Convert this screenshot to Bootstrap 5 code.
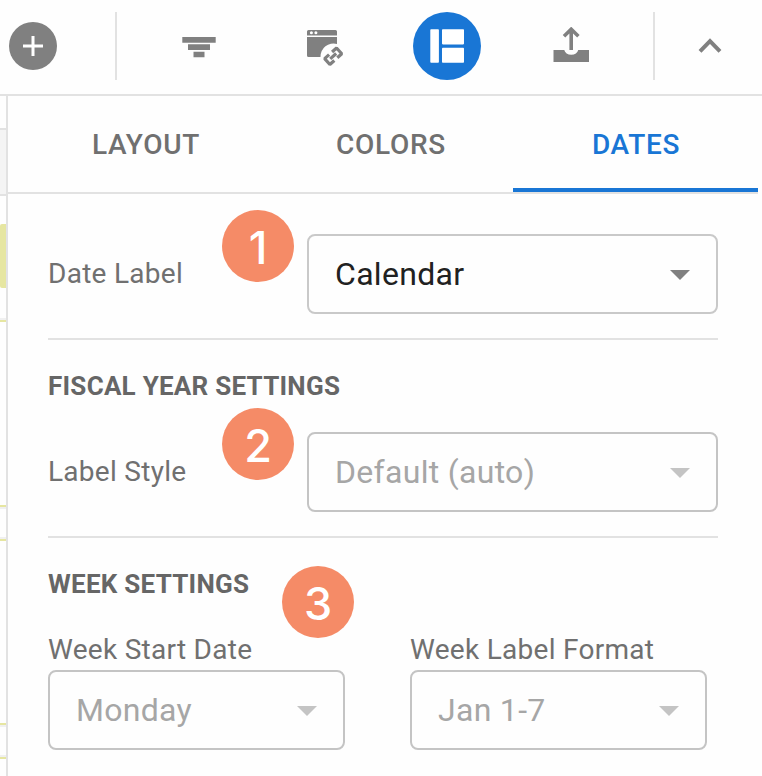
<!DOCTYPE html>
<html lang="en">
<head>
<meta charset="utf-8">
<meta name="viewport" content="width=device-width, initial-scale=1">
<title>Date settings</title>
<link rel="stylesheet" href="https://cdn.jsdelivr.net/npm/bootstrap@5.3.0/dist/css/bootstrap.min.css">
<style>
body{font-family:Roboto,sans-serif;background:#fefefe;color:#707070;height:776px;overflow:hidden}
.toolbar{height:96px;border-bottom:2px solid #e2e2e2;padding:0 0 2px 9px}
.tool{padding:0;border:0;background:none;color:#808080;line-height:0;flex:none}
.add-tool{width:48px;height:48px;background:#808080;border-radius:50%}
.filter-tool{margin-left:65px}
.link-tool{margin-left:90px}
.active-tool{width:68px;height:68px;background:#1976d5;border-radius:50%;margin-left:69px}
.export-tool{margin-left:72px}
.collapse-tool{margin-left:43px}
.rule-v{width:2px;height:68px;background:#e2e2e2;flex:none;margin-left:58px}
.export-tool + .rule-v{margin-left:63px}
.timeline{width:6px}
.timeline div{flex:none}
.t-head{height:68px;margin-top:32px;background:#f4f4f4;border:solid #e2e2e2;border-width:2px 0}
.t-bar{height:64px;margin:28px 0 2px;background:#e6e6a1;border-radius:2px 0 0 2px}
.t-open,.t-close{height:4px;border:solid #f0f0f0;border-width:2px 0}
.t-open{border-bottom-color:#e6e6a1;margin-top:28px}
.t-close{border-top-color:#e6e6a1;margin-top:183px}
.t-close ~ .t-close{margin-top:182px}
.panel{border-left:2px solid #e2e2e2}
.tabs{height:98px;margin-right:4px;padding-left:15px;border-bottom:2px solid #e2e2e2}
.tabs .nav-link{color:#707070;font-size:28px;font-weight:500;letter-spacing:.7px;line-height:96px;padding:1px 0 0 1px;border-radius:0;height:96px}
.tabs .nav-link.active{color:#1976d5;background:none;box-shadow:inset 0 -4px #1976d5}
.settings{padding:40px 44px 0 40px}
.setting-label{font-size:28px;line-height:32px;letter-spacing:.28px;margin:0}
.pick{height:80px;border:2px solid #c9c9c9;border-radius:8px;padding:0 26px;font-size:32px;letter-spacing:.3px;color:#212121;background:none;line-height:76px}
.pick:disabled{color:#a6a6a6;border-color:#c4c4c4}
.pick svg{fill:#808080;margin-top:1px}
.pick:disabled svg{fill:#c4c4c4}
.wide{width:411px}
.half{width:297px}
.rule-h{height:2px;background:#e2e2e2;margin:24px 0 30px}
.group-title{font-size:26px;font-weight:700;line-height:32px;letter-spacing:.25px;color:#666;margin:0}
.style-row{margin-top:30px}
.week-row{margin-top:34px;gap:65px}
.step{position:absolute;width:72px;height:72px;border-radius:50%;background:#f58b67;color:#fff;font:500 45px/75px Inter,"Liberation Sans",sans-serif;text-align:center}
.step-1{left:222px;top:210px}
.step-2{left:222px;top:408px}
.step-3{left:282px;top:566px}
</style>
<script src="https://cdn.jsdelivr.net/npm/bootstrap@5.3.0/dist/js/bootstrap.bundle.min.js"></script>
</head>
<body class="d-flex flex-column position-relative">
<header class="toolbar d-flex align-items-center flex-shrink-0">
  <button class="tool add-tool" aria-label="Add"><svg width="48" height="48"><path d="M24 14v20M14 24h20" stroke="#fff" stroke-width="3"/></svg></button>
  <div class="rule-v"></div>
  <button class="tool filter-tool" aria-label="Filter"><svg width="34" height="34" fill="#808080"><path d="M.3 8h33.400v5.700H.3zM6 15.300h22V21H6zM11.500 22.800h11v5.500h-11z"/></svg></button>
  <button class="tool link-tool" aria-label="Link view"><svg width="38" height="40" viewBox="306 26 38 40">
    <path fill="#808080" d="M308.500 30h27q1.500 0 1.500 1.500v4h-30v-4q0-1.500 1.500-1.500zM307 37h30v7a13 13 0 0 0-16.500 13h-12q-1.500 0-1.500-1.500z"/>
    <circle cx="311.400" cy="32.800" r="1.500" fill="#fff"/><circle cx="315.900" cy="32.800" r="1.500" fill="#fff"/>
    <g transform="translate(333.200 56.200) rotate(-42)" fill="none" stroke="#808080" stroke-width="3.200" stroke-linejoin="bevel"><path d="M-2-3.900H-8V3.900H-2M2-3.900H8V3.900H2M-4 0H4"/></g>
  </svg></button>
  <button class="tool active-tool" aria-label="Layout panel"><svg width="68" height="68" fill="#fff"><rect x="17.300" y="17.200" width="8.600" height="33.600" rx=".8"/><rect x="29" y="17.200" width="22" height="15.200" rx=".8"/><rect x="29" y="35.700" width="22" height="15.100" rx=".8"/></svg></button>
  <button class="tool export-tool" aria-label="Export"><svg width="37" height="38" viewBox="553 27 37 38">
    <path fill="#808080" d="M553.500 50h10.800a7 5.400 0 0 0 13.900 0H589v12h-35.500z"/>
    <path fill="none" stroke="#808080" stroke-width="3.600" d="M571.200 50V30M564 36.200l7.200-7 7.200 7"/>
  </svg></button>
  <div class="rule-v"></div>
  <button class="tool collapse-tool" aria-label="Collapse"><svg width="24" height="24"><path d="M2 17.300 12 7l10 10.300" fill="none" stroke="#808080" stroke-width="4"/></svg></button>
</header>
<main class="d-flex flex-grow-1">
  <aside class="timeline d-flex flex-column flex-shrink-0">
    <div class="t-head"></div>
    <div class="t-bar"></div>
    <div class="t-open"></div>
    <div class="t-close"></div>
    <div class="t-open"></div>
    <div class="t-close"></div>
    <div class="t-open"></div>
  </aside>
  <section class="panel flex-grow-1">
    <ul class="nav nav-fill tabs flex-nowrap">
      <li class="nav-item col-4"><a class="nav-link" href="#">LAYOUT</a></li>
      <li class="nav-item col-4"><a class="nav-link" href="#">COLORS</a></li>
      <li class="nav-item col-4"><a class="nav-link active" href="#">DATES</a></li>
    </ul>
    <div class="settings">
      <div class="d-flex align-items-center justify-content-between">
        <span class="setting-label">Date Label</span>
        <button class="pick wide d-flex align-items-center justify-content-between"><span>Calendar</span><svg width="20" height="10"><path d="M0 0h20L10 10z"/></svg></button>
      </div>
      <div class="rule-h"></div>
      <h2 class="group-title">FISCAL YEAR SETTINGS</h2>
      <div class="style-row d-flex align-items-center justify-content-between">
        <span class="setting-label">Label Style</span>
        <button class="pick wide d-flex align-items-center justify-content-between" disabled><span>Default (auto)</span><svg width="20" height="10"><path d="M0 0h20L10 10z"/></svg></button>
      </div>
      <div class="rule-h"></div>
      <h2 class="group-title">WEEK SETTINGS</h2>
      <div class="week-row d-flex">
        <div class="half d-flex flex-column gap-1">
          <span class="setting-label">Week Start Date</span>
          <button class="pick d-flex align-items-center justify-content-between" disabled><span>Monday</span><svg width="20" height="10"><path d="M0 0h20L10 10z"/></svg></button>
        </div>
        <div class="half d-flex flex-column gap-1">
          <span class="setting-label">Week Label Format</span>
          <button class="pick d-flex align-items-center justify-content-between" disabled><span>Jan 1-7</span><svg width="20" height="10"><path d="M0 0h20L10 10z"/></svg></button>
        </div>
      </div>
    </div>
  </section>
</main>
<div class="step step-1">1</div>
<div class="step step-2">2</div>
<div class="step step-3">3</div>
</body>
</html>
